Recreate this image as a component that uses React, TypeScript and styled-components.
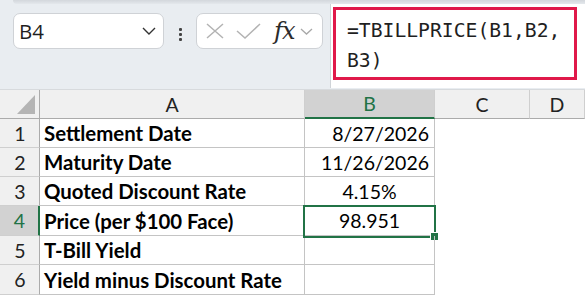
import React from "react"
import styled, { createGlobalStyle } from "styled-components"

const GREEN = "#217346"

const GlobalStyle = createGlobalStyle`
  html, body {
    margin: 0;
    padding: 0;
    background: #ffffff;
  }
  body {
    width: 585px;
    height: 298px;
    overflow: hidden;
    font-family: Lato, "Open Sans", sans-serif;
  }
`

const rows = [
  { n: 1, label: "Settlement Date", value: "8/27/2026", align: "right" },
  { n: 2, label: "Maturity Date", value: "11/26/2026", align: "right" },
  { n: 3, label: "Quoted Discount Rate", value: "4.15%", align: "center" },
  { n: 4, label: "Price (per $100 Face)", value: "98.951", align: "center" },
  { n: 5, label: "T-Bill Yield", value: "", align: "center" },
  { n: 6, label: "Yield minus Discount Rate", value: "", align: "center" }
]

const App: React.FC = () => (
  <Page>
    <GlobalStyle />
    <Toolbar>
      <TopStrip />
      <Controls>
        <NameBox>
          <span>B4</span>
          <svg width="14" height="8" viewBox="0 0 14 8">
            <path d="M1 1 L7 7 L13 1" fill="none" stroke="#333" strokeWidth="1.4" />
          </svg>
        </NameBox>
        <Dots>
          <i />
          <i />
          <i />
        </Dots>
        <FxBox>
          <svg width="18" height="16" viewBox="0 0 18 16">
            <path d="M1 1 L17 15 M17 1 L1 15" stroke="#b3b3b3" strokeWidth="1.5" />
          </svg>
          <svg width="25" height="16" viewBox="0 0 25 16">
            <path d="M1 8 L9 15 L24 1" fill="none" stroke="#b3b3b3" strokeWidth="1.5" />
          </svg>
          <FxLabel>fx</FxLabel>
          <svg width="13" height="7" viewBox="0 0 13 7">
            <path d="M1 1 L6.5 6 L12 1" fill="none" stroke="#a8a8a8" strokeWidth="1.3" />
          </svg>
        </FxBox>
        <FormulaBar>
          <Highlight>
            <FormulaText>
              =TBILLPRICE(B1,B2,
              <br />
              B3)
            </FormulaText>
          </Highlight>
        </FormulaBar>
      </Controls>
    </Toolbar>
    <Sheet>
      <Corner>
        <Triangle />
      </Corner>
      <ColHead>A</ColHead>
      <ColHead $active>B</ColHead>
      <ColHead>C</ColHead>
      <ColHead>D</ColHead>
      {rows.map((r) => (
        <React.Fragment key={r.n}>
          <RowHead $active={r.n === 4}>{r.n}</RowHead>
          <LabelCell>{r.label}</LabelCell>
          <ValueCell $align={r.align}>
            {r.value}
            {r.n === 4 && (
              <Selection>
                <FillHandle />
              </Selection>
            )}
          </ValueCell>
          <EmptyCell />
          <EmptyCell />
        </React.Fragment>
      ))}
    </Sheet>
  </Page>
)

const Page = styled.div`
  width: 585px;
  height: 298px;
  display: flex;
  flex-direction: column;
  background: #ffffff;
`

const Toolbar = styled.div`
  height: 89px;
  background: #e9edf1;
  border-bottom: 1px solid #d7dadd;
  display: flex;
  flex-direction: column;
`

const TopStrip = styled.div`
  height: 4px;
  margin-left: 13px;
  background: linear-gradient(#d3d7dc, #e4e8ec);
  border-bottom-left-radius: 4px;
`

const Controls = styled.div`
  flex: 1;
  display: flex;
  align-items: flex-start;
  padding-left: 13px;
`

const NameBox = styled.div`
  margin-top: 9px;
  width: 151px;
  height: 36px;
  box-sizing: border-box;
  background: #ffffff;
  border: 1px solid #cfd2d6;
  border-radius: 7px;
  display: flex;
  align-items: center;
  justify-content: space-between;
  padding: 0 7px 0 5px;
  font-size: 20.5px;
  color: #1f1f1f;
  font-family: "Open Sans", Lato, sans-serif;
`

const Dots = styled.div`
  width: 32px;
  margin-top: 24px;
  display: flex;
  flex-direction: column;
  align-items: center;
  gap: 2px;

  i {
    width: 3px;
    height: 3px;
    background: #444;
    border-radius: 1px;
  }
`

const FxBox = styled.div`
  margin-top: 9px;
  width: 127px;
  height: 36px;
  box-sizing: border-box;
  background: #ffffff;
  border: 1px solid #cfd2d6;
  border-radius: 7px;
  display: flex;
  align-items: center;
  gap: 12px;
  padding: 0 4px 0 9px;
`

const FxLabel = styled.span`
  font-family: "DejaVu Serif", "Liberation Serif", serif;
  font-style: italic;
  font-size: 24px;
  color: #2b2b2b;
  margin-left: 1px;
  margin-right: -6px;
  letter-spacing: -1px;
  line-height: 1;
`

const FormulaBar = styled.div`
  flex: 1;
  margin-left: 7px;
  height: 84px;
  background: #ffffff;
  border-left: 1px solid #d0d4d8;
  padding: 3px 8px 0 2px;
  box-sizing: border-box;
`

const Highlight = styled.div`
  height: 73px;
  box-sizing: border-box;
  border: 3px solid #e0194a;
  padding: 6px 0 0 11px;
`

const FormulaText = styled.div`
  font-family: "DejaVu Sans Mono", "Liberation Mono", monospace;
  font-size: 19.7px;
  line-height: 30px;
  color: #1f1f1f;
  white-space: nowrap;
`

const Sheet = styled.div`
  display: grid;
  grid-template-columns: 40px 265px 130px 95px 1fr;
  grid-template-rows: 29px repeat(3, 29px) 30px 29px 30px;
  font-size: 19.5px;
  color: #000;
`

const HeadBase = styled.div`
  box-sizing: border-box;
  background: #f0f0f0;
  display: flex;
  align-items: center;
  justify-content: center;
  color: #222;
`

const Corner = styled(HeadBase)`
  position: relative;
  border-right: 1px solid #ababab;
  border-bottom: 1px solid #ababab;
`

const Triangle = styled.div`
  position: absolute;
  right: 4px;
  bottom: 4px;
  width: 18px;
  height: 19px;
  background: #b4b4b4;
  clip-path: polygon(100% 0, 100% 100%, 0 100%);
`

const ColHead = styled(HeadBase)<{ $active?: boolean }>`
  border-right: 1px solid #cfcfcf;
  border-bottom: ${(p) => (p.$active ? `2px solid ${GREEN}` : "1px solid #ababab")};
  background: ${(p) => (p.$active ? "#d2d2d2" : "#f0f0f0")};
  color: ${(p) => (p.$active ? GREEN : "#222")};
`

const RowHead = styled(HeadBase)<{ $active?: boolean }>`
  border-bottom: 1px solid #cfcfcf;
  border-right: ${(p) => (p.$active ? `2px solid ${GREEN}` : "1px solid #ababab")};
  background: ${(p) => (p.$active ? "#d2d2d2" : "#f0f0f0")};
  color: ${(p) => (p.$active ? GREEN : "#222")};
  padding-left: 1px;
`

const CellBase = styled.div`
  box-sizing: border-box;
  display: flex;
  align-items: center;
  white-space: nowrap;
  border-right: 1px solid #c4c4c4;
  border-bottom: 1px solid #c4c4c4;
`

const LabelCell = styled(CellBase)`
  font-weight: 700;
  font-size: 20.4px;
  padding-left: 4px;
`

const ValueCell = styled(CellBase)<{ $align: string }>`
  position: relative;
  justify-content: ${(p) => (p.$align === "right" ? "flex-end" : "center")};
  padding-right: ${(p) => (p.$align === "right" ? "5px" : "0")};
`

const EmptyCell = styled.div`
  background: #ffffff;
`

const Selection = styled.div`
  position: absolute;
  left: -2px;
  top: -1px;
  right: -2px;
  bottom: -3px;
  border: 2px solid ${GREEN};
  pointer-events: none;
`

const FillHandle = styled.div`
  position: absolute;
  right: -5px;
  bottom: -5px;
  width: 7px;
  height: 7px;
  background: ${GREEN};
  border: 1px solid #ffffff;
`

export default App
